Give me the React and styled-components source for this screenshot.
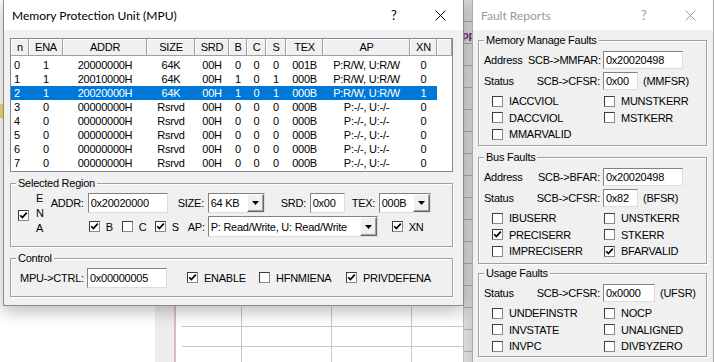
import React from "react";
import styled, { createGlobalStyle } from "styled-components";

const GlobalStyle = createGlobalStyle`
  html, body { margin: 0; padding: 0; background: #ffffff; }
  body {
    font-family: "Liberation Sans", Arial, sans-serif;
    font-size: 11px;
    letter-spacing: -0.25px;
    color: #000;
  }
  * { box-sizing: border-box; }
`;

const Desktop = styled.div`
  position: relative;
  width: 714px;
  height: 362px;
  overflow: hidden;
  background: #fff;
`;

/* the application behind the dialogs */
const BackMarker = styled.div`
  position: absolute;
  left: 0;
  top: 104px;
  width: 3px;
  height: 14px;
  background: #f2de6a;
`;

const BackGutter = styled.div`
  position: absolute;
  left: 155px;
  top: 290px;
  bottom: 0;
  width: 19px;
  background: #ededed;
`;

const BackRule = styled.div`
  position: absolute;
  left: 174px;
  top: 290px;
  bottom: 0;
  width: 2px;
  background: #d9bccb;
`;

const BackSheet = styled.div`
  position: absolute;
  left: 182px;
  top: 307px;
  width: 282px;
  bottom: 0;
  display: grid;
  grid-template-columns: 60px 90px 80px 1fr;
  grid-auto-rows: 20px;
`;

const SheetCell = styled.div`
  border-bottom: 1px solid #c6c6c6;
  border-right: ${(p) => (p.$last ? "none" : "1px solid #c6c6c6")};
`;

const BackStrip = styled.div`
  position: absolute;
  left: 463px;
  top: 0;
  bottom: 0;
  width: 9px;
  overflow: hidden;
  background: repeating-linear-gradient(to bottom, #dadada 0 21px, #a9a9a9 21px 22px);
  border-left: 1px solid #bdbdbd;
`;

const StripText = styled.span`
  display: block;
  margin-top: 29px;
  margin-left: -2px;
  color: #7a1f7a;
  font-weight: bold;
`;

/* windows */
const Window = styled.div`
  position: absolute;
  left: ${(p) => p.$left}px;
  top: ${(p) => p.$top}px;
  width: ${(p) => p.$width}px;
  height: ${(p) => p.$height}px;
  display: flex;
  flex-direction: column;
  background: #f0f0f0;
  border: 1px solid ${(p) => (p.$inactive ? "#aaaaaa" : "#8c8c8c")};
  box-shadow: ${(p) =>
    p.$inactive ? "0 2px 10px rgba(0,0,0,0.12)" : "0 5px 16px rgba(0,0,0,0.28)"};
`;

const TitleBar = styled.div`
  flex: none;
  height: 30px;
  display: flex;
  align-items: center;
  background: #fff;
`;

const TitleText = styled.div`
  flex: 1;
  padding-left: 8px;
  font-family: Lato, "Noto Sans", sans-serif;
  font-size: 12px;
  letter-spacing: 0;
  color: ${(p) => (p.$inactive ? "#9a9a9a" : "#000")};
`;

const CaptionButton = styled.div`
  flex: none;
  width: 46px;
  height: 30px;
  display: flex;
  align-items: center;
  justify-content: center;
  font-family: Lato, "Noto Sans", sans-serif;
  font-size: 13px;
  letter-spacing: 0;
  color: ${(p) => (p.$inactive ? "#9a9a9a" : "#000")};
`;

const WindowBody = styled.div`
  flex: 1;
  display: flex;
  flex-direction: column;
  padding: ${(p) => p.$pad};
`;

/* list view */
const COLS = "18px 34px 84px 48px 34px 18px 19px 20px 37px 87px 27px";

const ListView = styled.div`
  flex: none;
  width: 443px;
  height: 134px;
  display: flex;
  flex-direction: column;
  background: #fff;
  border: 1px solid #828790;
`;

const HeaderRow = styled.div`
  display: grid;
  grid-template-columns: ${COLS} 1fr;
  height: 17px;
`;

const HeaderCell = styled.div`
  line-height: 17px;
  text-align: center;
  background: #f0f0f0;
  box-shadow: inset -1px -1px 0 #a0a0a0, inset 1px 1px 0 #ffffff;
  white-space: nowrap;
`;

const RowList = styled.div`
  padding-top: 2px;
`;

const Row = styled.div`
  display: grid;
  grid-template-columns: ${COLS};
  width: 426px;
  height: 14px;
  line-height: 14px;
  background: ${(p) => (p.$selected ? "#0078d7" : "transparent")};
  color: ${(p) => (p.$selected ? "#fff" : "#000")};
`;

const Cell = styled.div`
  text-align: ${(p) => (p.$left ? "left" : "center")};
  padding-left: ${(p) => (p.$left ? "3px" : "0")};
  white-space: nowrap;
`;

/* group boxes */
const Group = styled.div`
  position: relative;
  flex: none;
  width: ${(p) => p.$w}px;
  height: ${(p) => p.$h}px;
  margin-top: ${(p) => p.$mt}px;
  padding: ${(p) => p.$pad};
  display: flex;
  flex-direction: ${(p) => (p.$column ? "column" : "row")};
  align-items: ${(p) => (p.$column ? "stretch" : "center")};
  border: 1px solid #a0a0a0;
  box-shadow: inset 1px 1px 0 #fff, 1px 1px 0 #fff;
`;

const GroupCaption = styled.span`
  position: absolute;
  top: -7px;
  left: 5px;
  padding: 0 2px;
  line-height: 13px;
  background: #f0f0f0;
  white-space: nowrap;
`;

/* controls */
const FieldRow = styled.div`
  display: flex;
  align-items: center;
  height: ${(p) => p.$h}px;
  margin-top: ${(p) => p.$mt || 0}px;
  margin-left: ${(p) => p.$ml || 0}px;
`;

const FieldStack = styled.div`
  display: flex;
  flex-direction: column;
`;

const Label = styled.span`
  flex: none;
  width: ${(p) => (p.$w ? `${p.$w}px` : "auto")};
  margin-left: ${(p) => p.$ml || 0}px;
  text-align: ${(p) => (p.$right ? "right" : "left")};
  white-space: nowrap;
`;

const TextBox = styled.div`
  flex: none;
  width: ${(p) => p.$w}px;
  height: ${(p) => p.$h || 20}px;
  margin-left: ${(p) => p.$ml || 0}px;
  padding-left: 2px;
  display: flex;
  align-items: center;
  overflow: hidden;
  white-space: nowrap;
  background: #fff;
  border: 1px solid;
  border-color: #828282 #dcdcdc #dcdcdc #828282;
`;

const Select = styled.div`
  flex: none;
  width: ${(p) => p.$w}px;
  height: ${(p) => p.$h || 20}px;
  margin-left: ${(p) => p.$ml || 0}px;
  display: flex;
  align-items: stretch;
  background: #fff;
  border: 1px solid;
  border-color: #828282 #dcdcdc #dcdcdc #828282;
`;

const SelectValue = styled.span`
  flex: 1;
  padding-left: 2px;
  display: flex;
  align-items: center;
  overflow: hidden;
  white-space: nowrap;
`;

const DropButton = styled.span`
  flex: none;
  width: 17px;
  display: flex;
  align-items: center;
  justify-content: center;
  background: #f0f0f0;
  border: 1px solid;
  border-color: #fff #696969 #696969 #fff;
  box-shadow: inset -1px -1px 0 #a0a0a0;
`;

const CheckItem = styled.span`
  flex: none;
  display: flex;
  align-items: center;
  gap: 6px;
  width: ${(p) => (p.$w ? `${p.$w}px` : "auto")};
  margin-left: ${(p) => p.$ml || 0}px;
  white-space: nowrap;
`;

const Box = styled.span`
  flex: none;
  width: 11px;
  height: 11px;
  display: flex;
  align-items: center;
  justify-content: center;
  background: #fff;
  border: 1px solid;
  border-color: #3c3c3c #8a8a8a #8a8a8a #3c3c3c;
`;

const EnaBlock = styled.div`
  flex: none;
  display: flex;
  align-items: center;
`;

const Letters = styled.div`
  margin-left: 7px;
  margin-top: -3px;
  display: flex;
  flex-direction: column;
  line-height: 15px;
`;

const CheckGrid = styled.div`
  margin-top: 3px;
  margin-left: 8px;
  display: grid;
  grid-template-columns: 112px auto;
  grid-auto-rows: 16.5px;
  align-items: center;
`;

const CheckBox = ({ on }) => (
  <Box>
    {on && (
      <svg width="9" height="9" viewBox="0 0 9 9">
        <path d="M1.2 4.2 L3.4 6.6 L7.8 1.6" stroke="#000" strokeWidth="1.7" fill="none" />
      </svg>
    )}
  </Box>
);

const Check = ({ on, label, w, ml }) => (
  <CheckItem $w={w} $ml={ml}>
    <CheckBox on={on} />
    {label}
  </CheckItem>
);

const Combo = ({ value, w, h, ml }) => (
  <Select $w={w} $h={h} $ml={ml}>
    <SelectValue>{value}</SelectValue>
    <DropButton>
      <svg width="7" height="4" viewBox="0 0 7 4">
        <path d="M0 0 H7 L3.5 4 Z" fill="#000" />
      </svg>
    </DropButton>
  </Select>
);

const CloseGlyph = ({ color }) => (
  <svg width="11" height="11" viewBox="0 0 11 11">
    <path d="M0.5 0.5 L10.5 10.5 M10.5 0.5 L0.5 10.5" stroke={color} strokeWidth="1" fill="none" />
  </svg>
);

const headers = ["n", "ENA", "ADDR", "SIZE", "SRD", "B", "C", "S", "TEX", "AP", "XN", ""];

const empty = (n) => [String(n), "0", "00000000H", "Rsrvd", "00H", "0", "0", "0", "000B", "P:-/-, U:-/-", "0"];

const regions = [
  ["0", "1", "20000000H", "64K", "00H", "0", "0", "0", "001B", "P:R/W, U:R/W", "0"],
  ["1", "1", "20010000H", "64K", "00H", "1", "0", "1", "000B", "P:R/W, U:R/W", "0"],
  ["2", "1", "20020000H", "64K", "00H", "1", "0", "1", "000B", "P:R/W, U:R/W", "1"],
  empty(3),
  empty(4),
  empty(5),
  empty(6),
  empty(7),
];

const FaultGroup = ({ title, mt, h, rows, checks }) => (
  <Group $mt={mt} $w={229} $h={h} $pad="10px 0 0 5px" $column>
    <GroupCaption>{title}</GroupCaption>
    {rows.map((r, i) => (
      <FieldRow key={r.reg + i} $h={18} $mt={i ? 3 : 0}>
        <Label $w={44}>{r.tag}</Label>
        <Label $w={72} $right>{r.reg}</Label>
        <TextBox $w={r.w} $h={18} $ml={3}>{r.value}</TextBox>
        {r.suffix && <Label $ml={5}>{r.suffix}</Label>}
      </FieldRow>
    ))}
    <CheckGrid>
      {checks.map(([label, on]) => (
        <Check key={label} label={label} on={on} />
      ))}
    </CheckGrid>
  </Group>
);

export default function App() {
  return (
    <>
      <GlobalStyle />
      <Desktop>
        <BackMarker />
        <BackGutter />
        <BackRule />
        <BackSheet>
          {Array.from({ length: 12 }).map((_, i) => (
            <SheetCell key={i} $last={i % 4 === 3} />
          ))}
        </BackSheet>
        <BackStrip>
          <StripText>pp</StripText>
        </BackStrip>

        <Window $left={3} $top={-1} $width={461} $height={307}>
          <TitleBar>
            <TitleText>Memory Protection Unit (MPU)</TitleText>
            <CaptionButton>?</CaptionButton>
            <CaptionButton>
              <CloseGlyph color="#000" />
            </CaptionButton>
          </TitleBar>
          <WindowBody $pad="8px 0 0 6px">
            <ListView>
              <HeaderRow>
                {headers.map((h, i) => (
                  <HeaderCell key={i}>{h}</HeaderCell>
                ))}
              </HeaderRow>
              <RowList>
                {regions.map((r) => (
                  <Row key={r[0]} $selected={r[0] === "2"}>
                    {r.map((v, i) => (
                      <Cell key={i} $left={i === 0}>
                        {v}
                      </Cell>
                    ))}
                  </Row>
                ))}
              </RowList>
            </ListView>

            <Group $mt={11} $w={443} $h={64} $pad="0 0 0 7px">
              <GroupCaption>Selected Region</GroupCaption>
              <EnaBlock>
                <CheckBox on />
                <Letters>
                  <span>E</span>
                  <span>N</span>
                  <span>A</span>
                </Letters>
              </EnaBlock>
              <FieldStack>
                <FieldRow $h={20} $ml={7}>
                  <Label $w={37}>ADDR:</Label>
                  <TextBox $w={80}>0x20020000</TextBox>
                  <Label $w={30} $ml={10}>SIZE:</Label>
                  <Combo value="64 KB" w={57} />
                  <Label $w={29} $ml={16}>SRD:</Label>
                  <TextBox $w={35}>0x00</TextBox>
                  <Label $w={27} $ml={7}>TEX:</Label>
                  <Combo value="000B" w={52} />
                </FieldRow>
                <FieldRow $h={21} $mt={3} $ml={45}>
                  <Check on label="B" w={33} />
                  <Check label="C" w={33} />
                  <Check on label="S" w={33} />
                  <Label $w={20}>AP:</Label>
                  <Combo value="P: Read/Write, U: Read/Write" w={170} h={21} />
                  <Check on label="XN" ml={14} />
                </FieldRow>
              </FieldStack>
            </Group>

            <Group $mt={11} $w={443} $h={39} $pad="0 0 0 9px">
              <GroupCaption>Control</GroupCaption>
              <Label $w={67}>MPU-&gt;CTRL:</Label>
              <TextBox $w={80}>0x00000005</TextBox>
              <Check on label="ENABLE" w={72} ml={20} />
              <Check label="HFNMIENA" w={87} />
              <Check on label="PRIVDEFENA" />
            </Group>
          </WindowBody>
        </Window>

        <Window $left={472} $top={-1} $width={242} $height={372} $inactive>
          <TitleBar>
            <TitleText $inactive>Fault Reports</TitleText>
            <CaptionButton $inactive>?</CaptionButton>
            <CaptionButton $inactive>
              <CloseGlyph color="#9a9a9a" />
            </CaptionButton>
          </TitleBar>
          <WindowBody $pad="10px 0 0 5px">
            <FaultGroup
              title="Memory Manage Faults"
              mt={0}
              h={106}
              rows={[
                { tag: "Address", reg: "SCB->MMFAR:", value: "0x20020498", w: 80 },
                { tag: "Status", reg: "SCB->CFSR:", value: "0x00", w: 35, suffix: "(MMFSR)" },
              ]}
              checks={[
                ["IACCVIOL", false],
                ["MUNSTKERR", false],
                ["DACCVIOL", false],
                ["MSTKERR", false],
                ["MMARVALID", false],
              ]}
            />
            <FaultGroup
              title="Bus Faults"
              mt={11}
              h={107}
              rows={[
                { tag: "Address", reg: "SCB->BFAR:", value: "0x20020498", w: 80 },
                { tag: "Status", reg: "SCB->CFSR:", value: "0x82", w: 35, suffix: "(BFSR)" },
              ]}
              checks={[
                ["IBUSERR", false],
                ["UNSTKERR", false],
                ["PRECISERR", true],
                ["STKERR", false],
                ["IMPRECISERR", false],
                ["BFARVALID", true],
              ]}
            />
            <FaultGroup
              title="Usage Faults"
              mt={9}
              h={84}
              rows={[
                { tag: "Status", reg: "SCB->CFSR:", value: "0x0000", w: 52, suffix: "(UFSR)" },
              ]}
              checks={[
                ["UNDEFINSTR", false],
                ["NOCP", false],
                ["INVSTATE", false],
                ["UNALIGNED", false],
                ["INVPC", false],
                ["DIVBYZERO", false],
              ]}
            />
          </WindowBody>
        </Window>
      </Desktop>
    </>
  );
}
